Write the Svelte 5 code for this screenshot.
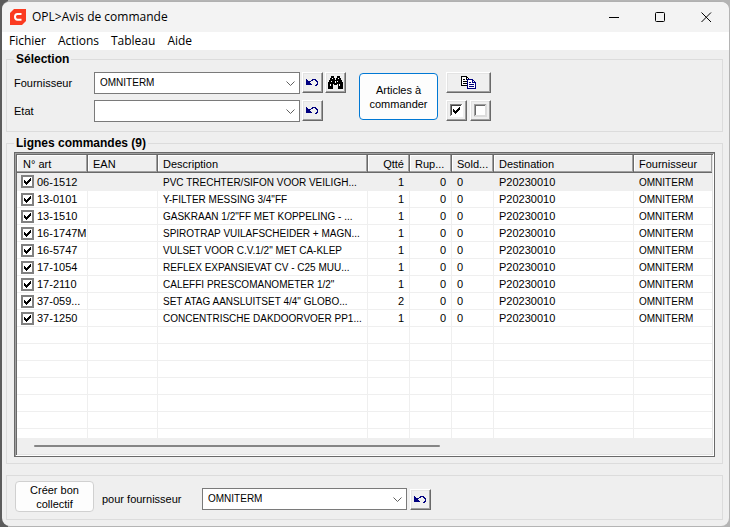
<script lang="ts">
  type Line = {
    art: string;
    desc: string;
    qty: number;
    checked: boolean;
  };

  let lines: Line[] = $state([
    { art: '06-1512', desc: 'PVC TRECHTER/SIFON VOOR VEILIGH...', qty: 1, checked: true },
    { art: '13-0101', desc: 'Y-FILTER MESSING 3/4"FF', qty: 1, checked: true },
    { art: '13-1510', desc: 'GASKRAAN 1/2"FF MET KOPPELING - ...', qty: 1, checked: true },
    { art: '16-1747M', desc: 'SPIROTRAP VUILAFSCHEIDER + MAGN...', qty: 1, checked: true },
    { art: '16-5747', desc: 'VULSET VOOR C.V.1/2" MET CA-KLEP', qty: 1, checked: true },
    { art: '17-1054', desc: 'REFLEX EXPANSIEVAT CV - C25 MUU...', qty: 1, checked: true },
    { art: '17-2110', desc: 'CALEFFI PRESCOMANOMETER 1/2"', qty: 1, checked: true },
    { art: '37-059...', desc: 'SET ATAG AANSLUITSET 4/4" GLOBO...', qty: 2, checked: true },
    { art: '37-1250', desc: 'CONCENTRISCHE DAKDOORVOER PP1...', qty: 1, checked: true },
  ]);

  const menus = ['Fichier', 'Actions', 'Tableau', 'Aide'];
  const emptyRows = Array(30).fill(0);

  let selected = $state(0);
  let supplier = $state('OMNITERM');
  let status = $state('');
  let orderSupplier = $state('OMNITERM');

  function setAll(value: boolean) {
    for (const line of lines) line.checked = value;
  }
</script>

{#snippet undoIcon()}
  <svg width="13" height="9" viewBox="0 0 13 9" shape-rendering="crispEdges" aria-hidden="true">
    <path d="M0 1h1v1h1v1h1v1h1v1h1v1h1v1h-6z" fill="#000080" />
    <path d="M3 3h2v-1h1v-1h4v1h1v1h1v4h-1v1h-2v-1h1v-1h1v-2h-1v-1h-1v-1h-2v1h-2v1h-2z" fill="#000080" />
  </svg>
{/snippet}

{#snippet chevron()}
  <svg class="chevron" width="9" height="6" viewBox="0 0 9 6" aria-hidden="true">
    <path d="M0.500 0.500L4.500 4.500L8.500 0.500" fill="none" stroke="#606060" />
  </svg>
{/snippet}

<div class="desktop">
  <div class="window">
    <header class="titlebar">
      <svg width="16" height="16" viewBox="0 0 16 16" aria-hidden="true">
        <path d="M4 0H16V12L12 16H0V4Z" fill="#fb3b21" />
        <path d="M11.500 5H7.500Q5 5 5 7.800T7.500 10.800H11.500" fill="none" stroke="#fff" stroke-width="2" />
      </svg>
      <span class="title">OPL&gt;Avis de commande</span>
      <button class="caption" aria-label="Réduire">
        <svg width="11" height="11" viewBox="0 0 11 11"><path d="M0 5.500H10" stroke="#000" /></svg>
      </button>
      <button class="caption" aria-label="Agrandir">
        <svg width="11" height="11" viewBox="0 0 11 11">
          <rect x="0.500" y="0.500" width="9" height="9" rx="1" fill="none" stroke="#000" />
        </svg>
      </button>
      <button class="caption" aria-label="Fermer">
        <svg width="11" height="11" viewBox="0 0 11 11">
          <path d="M0.500 0.500L10 10M10 0.500L0.500 10" stroke="#000" />
        </svg>
      </button>
    </header>

    <nav class="menubar">
      {#each menus as menu}
        <button>{menu}</button>
      {/each}
    </nav>

    <main>
      <fieldset class="selection">
        <legend>Sélection</legend>
        <div class="filters">
          <label for="supplier">Fournisseur</label>
          <div class="combo">
            <select id="supplier" bind:value={supplier}>
              <option value=""></option>
              <option>OMNITERM</option>
            </select>
            {@render chevron()}
          </div>
          <button class="tool" aria-label="Annuler fournisseur" onclick={() => (supplier = '')}>
            {@render undoIcon()}
          </button>
          <button class="tool" aria-label="Rechercher">
            <svg width="15" height="13" viewBox="0 0 15 13" shape-rendering="crispEdges">
              <path d="M3 0h3v2h1v2h1v-2h1v-2h3v2h1v2h1v2h1v7h-5v-5h-1v1h-3v-1h-1v5h-5v-7h1v-2h1v-2h1z" fill="#000" />
              <path d="M4 2h1v1h-1zM10 2h1v1h-1zM3 5h1v1h-1zM9 5h1v1h-1zM2 8h1v2h-1zM11 8h1v2h-1zM7 5h1v2h-1z" fill="#fff" />
            </svg>
          </button>

          <label for="status">Etat</label>
          <div class="combo">
            <select id="status" bind:value={status}>
              <option value=""></option>
            </select>
            {@render chevron()}
          </div>
          <button class="tool" aria-label="Annuler état" onclick={() => (status = '')}>
            {@render undoIcon()}
          </button>
        </div>

        <button class="push primary">Articles à commander</button>

        <div class="tools">
          <button class="tool wide" aria-label="Copier">
            <svg width="16" height="13" viewBox="0 0 16 13" shape-rendering="crispEdges">
              <path d="M0.500 0.500H5.500L8.500 3.500V9.500H0.500Z" fill="#fff" stroke="#000" />
              <path d="M5.500 0.500V3.500H8.500M2 3.500H4M2 5.500H6M2 7.500H6" fill="none" stroke="#000" />
              <path d="M6.500 3.500H11.500L14.500 6.500V12.500H6.500Z" fill="#fff" stroke="#000080" />
              <path d="M11.500 3.500V6.500H14.500M8 6.500H10M8 8.500H13M8 10.500H13" fill="none" stroke="#000080" />
            </svg>
          </button>
          <button class="tool" aria-label="Tout cocher" onclick={() => setAll(true)}>
            <svg width="13" height="13" viewBox="0 0 13 13" shape-rendering="crispEdges">
              <path d="M0 0H13V13H0Z" fill="#fff" />
              <path d="M0 0H12V1H1V12H0Z" fill="#808080" />
              <path d="M1 1H11V2H2V11H1Z" fill="#404040" />
              <path d="M3 5h1v1h1v1h1v-1h1v-1h1v-1h1v-1h1v3h-1v1h-1v1h-1v1h-1v1h-1v-1h-1v-1h-1z" fill="#000" />
            </svg>
          </button>
          <button class="tool" aria-label="Tout décocher" onclick={() => setAll(false)}>
            <svg width="13" height="13" viewBox="0 0 13 13" shape-rendering="crispEdges">
              <path d="M0 0H13V13H0Z" fill="#dcdcdc" />
              <path d="M2 2H11V11H2Z" fill="#fff" />
              <path d="M0 0H12V1H1V12H0Z" fill="#a0a0a0" />
              <path d="M1 1H11V2H2V11H1Z" fill="#696969" />
            </svg>
          </button>
        </div>
      </fieldset>

      <fieldset class="orders">
        <legend>Lignes commandes ({lines.length})</legend>
        <div class="frame">
          <div class="viewport">
            <table>
              <colgroup>
                <col class="c-art" />
                <col class="c-ean" />
                <col class="c-desc" />
                <col class="c-num" />
                <col class="c-num" />
                <col class="c-num" />
                <col class="c-dest" />
                <col />
              </colgroup>
              <thead>
                <tr>
                  <th>N° art</th>
                  <th>EAN</th>
                  <th>Description</th>
                  <th class="right">Qtté</th>
                  <th>Rup...</th>
                  <th>Sold...</th>
                  <th>Destination</th>
                  <th>Fournisseur</th>
                </tr>
              </thead>
              <tbody>
                {#each lines as line, i}
                  <tr class:selected={i === selected} onclick={() => (selected = i)}>
                    <td>
                      <label class="check">
                        <input type="checkbox" bind:checked={line.checked} />
                        <svg width="9" height="9" viewBox="0 0 9 9" shape-rendering="crispEdges" aria-hidden="true">
                          <path d="M1 3h1v1h1v1h1v-1h1v-1h1v-1h1v-1h1v3h-1v1h-1v1h-1v1h-1v1h-1v-1h-1v-1h-1z" fill="#000" />
                        </svg>
                        {line.art}
                      </label>
                    </td>
                    <td></td>
                    <td><span class="caps">{line.desc}</span></td>
                    <td class="right">{line.qty}</td>
                    <td class="right">0</td>
                    <td>0</td>
                    <td>P20230010</td>
                    <td><span class="caps">OMNITERM</span></td>
                  </tr>
                {/each}
                {#each emptyRows as _}
                  <tr>
                    <td></td><td></td><td></td><td></td><td></td><td></td><td></td><td></td>
                  </tr>
                {/each}
              </tbody>
            </table>
          </div>
          <div class="scrollbar"><div class="thumb"></div></div>
        </div>
      </fieldset>

      <fieldset class="create">
        <button class="push">Créer bon collectif</button>
        <div class="target">
          <label for="order-supplier">pour fournisseur</label>
          <div class="combo">
            <select id="order-supplier" bind:value={orderSupplier}>
              <option value=""></option>
              <option>OMNITERM</option>
            </select>
            {@render chevron()}
          </div>
          <button class="tool" aria-label="Annuler" onclick={() => (orderSupplier = '')}>
            {@render undoIcon()}
          </button>
        </div>
      </fieldset>
    </main>
  </div>
</div>

<style>
  :global(body) {
    margin: 0;
  }

  .desktop {
    box-sizing: border-box;
    height: 100vh;
    padding: 1px 1px 1px 2px;
    background: linear-gradient(to right, #5c5c5c 8px, #b4b4b4 8px);
    font-family: 'Liberation Sans', Arial, sans-serif;
    font-size: 11px;
    line-height: 14px;
    color: #000;
  }

  .window {
    box-sizing: border-box;
    height: 100%;
    display: flex;
    flex-direction: column;
    border-top: 1px solid #b0b0b0;
    border-radius: 8px;
    background: #efefef;
    overflow: hidden;
  }

  button,
  select {
    font: inherit;
    color: inherit;
  }

  .titlebar {
    display: flex;
    align-items: center;
    height: 30px;
    padding-left: 8px;
    background: #f3f3f3;
    font-family: 'Open Sans', 'Segoe UI', sans-serif;
    font-size: 12px;
  }

  .title {
    flex: 1;
    margin-left: 6px;
  }

  .caption {
    display: flex;
    align-items: center;
    justify-content: center;
    width: 46px;
    height: 100%;
    padding: 0;
    border: none;
    background: none;
  }

  .menubar {
    display: flex;
    gap: 12px;
    height: 18px;
    padding-left: 7px;
    background: #fff;
    font-family: 'Open Sans', 'Segoe UI', sans-serif;
    font-size: 12px;
    line-height: 18px;
  }

  .menubar button {
    padding: 0;
    border: none;
    background: none;
  }

  main {
    flex: 1;
    min-height: 0;
    display: flex;
    flex-direction: column;
    padding: 2px 6px 6px 4px;
  }

  fieldset {
    min-width: 0;
    margin: 0;
    border: 1px solid #dcdcdc;
  }

  legend {
    padding: 0 2px;
    font-size: 12px;
    font-weight: bold;
    line-height: 15px;
  }

  .selection {
    display: flex;
    padding: 5px 7px 9px;
  }

  .filters {
    display: grid;
    grid-template-columns: 78px 206px 21px 21px;
    gap: 6px 2px;
  }

  .filters label {
    align-self: center;
  }

  .combo {
    position: relative;
  }

  .combo select {
    appearance: none;
    display: block;
    box-sizing: border-box;
    width: 100%;
    height: 22px;
    padding: 0 20px 0 5px;
    border: 1px solid #7a7a7a;
    border-radius: 0;
    background: #fff;
    font-size: 10px;
  }

  .chevron {
    position: absolute;
    top: 9px;
    right: 5px;
    pointer-events: none;
  }

  .tool {
    display: flex;
    align-items: center;
    justify-content: center;
    box-sizing: border-box;
    width: 21px;
    height: 21px;
    padding: 0;
    border: 1px solid;
    border-color: #fff #696969 #696969 #fff;
    background: #efefef;
    box-shadow: inset -1px -1px #a0a0a0, inset 1px 1px #e3e3e3;
  }

  .tool svg {
    flex: none;
  }

  .push {
    box-sizing: border-box;
    width: 79px;
    padding: 0 8px;
    border: 1px solid #d0d0d0;
    border-radius: 4px;
    background: #fdfdfd;
  }

  .push.primary {
    height: 47px;
    margin: 1px 8px 0 13px;
    border-color: #0078d4;
  }

  .tools {
    display: grid;
    grid-template-columns: 21px 21px;
    align-content: start;
    gap: 7px 3px;
  }

  .tool.wide {
    grid-column: span 2;
    width: 100%;
  }

  .orders {
    flex: 1;
    min-height: 0;
    display: flex;
    flex-direction: column;
    margin-top: 4px;
    padding: 1px 7px 6px;
  }

  .frame {
    flex: 1;
    min-height: 0;
    display: flex;
    flex-direction: column;
    padding: 2px;
    border: 1px solid #696969;
    background: #fff;
    box-shadow: inset 1px 1px #a0a0a0, inset -1px -1px #fff, inset 2px 2px #696969, inset -2px -2px #e3e3e3;
  }

  .viewport {
    flex: 1;
    min-height: 0;
    overflow: hidden;
  }

  table {
    width: 100%;
    table-layout: fixed;
    border-spacing: 0;
  }

  .c-art {
    width: 71px;
  }

  .c-ean {
    width: 70px;
  }

  .c-desc {
    width: 210px;
  }

  .c-num {
    width: 42px;
  }

  .c-dest {
    width: 140px;
  }

  th,
  td {
    box-sizing: border-box;
    height: 17px;
    padding: 0 5px;
    border-right: 1px solid #efefef;
    border-bottom: 1px solid #efefef;
    font-weight: normal;
    line-height: 16px;
    text-align: left;
    white-space: nowrap;
  }

  th {
    height: 18px;
    border-color: #696969;
    background: #efefef;
    box-shadow: inset -1px -1px #a0a0a0, inset 1px 1px #fff;
  }

  th:first-child {
    padding-left: 6px;
  }

  td:first-child {
    padding: 0 0 0 4px;
  }

  th:last-child,
  td:last-child {
    border-right: none;
  }

  .caps {
    font-size: 10px;
    line-height: 14px;
  }

  .right {
    text-align: right;
  }

  .selected td {
    height: 18px;
    background: #efefef;
  }

  .check {
    display: flex;
    align-items: center;
    gap: 3px;
    height: 16px;
  }

  .check input {
    appearance: none;
    box-sizing: border-box;
    flex: none;
    width: 13px;
    height: 13px;
    margin: 0;
    border: 2px solid #808080;
    background: #fff;
  }

  /* the tick is laid over the box */
  .check svg {
    flex: none;
    margin-left: -14px;
    margin-right: 2px;
    visibility: hidden;
    pointer-events: none;
  }

  .check input:checked + svg {
    visibility: visible;
  }

  .scrollbar {
    display: flex;
    align-items: center;
    height: 16px;
    padding: 0 13px 0 17px;
    background: #efefef;
  }

  .thumb {
    width: 61%;
    height: 2px;
    border-radius: 1px;
    background: #858585;
  }

  .create {
    display: flex;
    margin-top: 11px;
    padding: 5px 8px 7px;
  }

  .create .push {
    height: 31px;
  }

  .target {
    display: flex;
    align-items: center;
    padding-top: 5px;
  }

  .target label {
    width: 100px;
    margin-left: 8px;
  }

  .target .combo {
    width: 205px;
    margin-right: 3px;
  }
</style>
